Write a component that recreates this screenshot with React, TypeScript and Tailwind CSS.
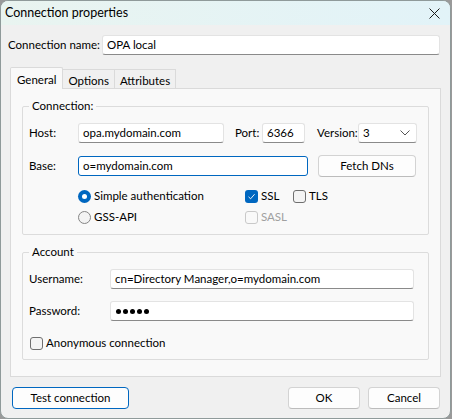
import React from "react";

const FONT = "[font-family:Lato,sans-serif]";

function Field({
  className,
  children,
  focus,
}: {
  className: string;
  children?: React.ReactNode;
  focus?: boolean;
}) {
  return (
    <div
      className={`h-[20px] shrink-0 bg-white rounded-[3px] border flex items-center pl-[4px] text-[11.5px] text-black whitespace-nowrap ${
        focus ? "border-[#0067c0]" : "border-[#e3e3e3] border-b-[#8a8a8a]"
      } ${className}`}
    >
      {children}
    </div>
  );
}

function Btn({ className, children, primary }: { className: string; children: React.ReactNode; primary?: boolean }) {
  return (
    <div
      className={`h-[22px] shrink-0 rounded-[4px] border bg-[#fdfdfd] flex items-center justify-center text-[11.5px] text-black whitespace-nowrap ${
        primary ? "border-[#0067c0]" : "border-[#d3d3d3] border-b-[#bcbcbc]"
      } ${className}`}
    >
      {children}
    </div>
  );
}

function Radio({ checked }: { checked?: boolean }) {
  return checked ? (
    <span className="w-[13px] h-[13px] rounded-full bg-[#0067c0] flex items-center justify-center shrink-0">
      <span className="w-[5px] h-[5px] rounded-full bg-white" />
    </span>
  ) : (
    <span className="w-[13px] h-[13px] rounded-full border border-[#858585] bg-[#f3f3f3] shrink-0" />
  );
}

function Check({ state }: { state: "on" | "off" | "disabled" }) {
  if (state === "on")
    return (
      <span className="w-[13px] h-[13px] rounded-[3px] bg-[#0067c0] flex items-center justify-center shrink-0">
        <svg width="9" height="9" viewBox="0 0 9 9">
          <path d="M1.5 4.8 L3.6 6.8 L7.6 2.2" fill="none" stroke="white" strokeWidth="0.9" />
        </svg>
      </span>
    );
  if (state === "off")
    return <span className="w-[13px] h-[13px] rounded-[3px] border border-[#6f6f6f] bg-[#f4f4f4] shrink-0" />;
  return <span className="w-[13px] h-[13px] rounded-[3px] border border-[#c9c9c9] shrink-0" />;
}

export default function App() {
  return (
    <div className={`w-[452px] h-[419px] bg-[#9a9a9a] whitespace-nowrap ${FONT}`}>
      <div className="w-[451px] h-[419px] rounded-[8px] border border-[#8f9a9a] bg-[#f0f0f0] overflow-hidden flex flex-col text-[11.5px]">
        {/* Title bar */}
        <div className="h-[24px] shrink-0 bg-gradient-to-r from-[#e9f4f0] to-[#e2f3f8] flex items-center justify-between pl-[4px] pr-[10px]">
          <span className="text-[12.5px] text-black">Connection properties</span>
          <svg width="11" height="11" viewBox="0 0 11 11">
            <path d="M0.5 0.5 L10.5 10.5 M10.5 0.5 L0.5 10.5" stroke="#1a1a1a" strokeWidth="1" />
          </svg>
        </div>

        {/* Connection name */}
        <div className="mt-[10px] pl-[7px] flex items-center shrink-0">
          <span className="w-[94px] text-black">Connection name:</span>
          <Field className="w-[338px]">OPA local</Field>
        </div>

        {/* Tabs */}
        <div className="mt-[12px] px-[9px] shrink-0">
          <div className="flex items-end text-black">
            <div className="relative z-10 h-[22px] -mb-px px-[6px] pt-[3px] bg-[#f9f9f9] border-x border-t border-[#dadada] rounded-t-[2px]">
              General
            </div>
            <div className="h-[19px] px-[5px] pt-[2px] bg-[#f0f0f0] border-t border-r border-[#dadada]">Options</div>
            <div className="h-[19px] px-[5px] pt-[2px] bg-[#f0f0f0] border-t border-r border-[#dadada]">Attributes</div>
          </div>

          <div className="h-[289px] bg-[#f9f9f9] border border-[#dadada] px-[11px] pt-[9px] text-black">
            {/* Connection group */}
            <fieldset className="border border-[#dcdcdc] rounded-[2px]">
              <legend className="ml-[6px] px-[3px] leading-[16px]">Connection:</legend>
              <div className="pl-[6px] pt-[9px] pb-[9px]">
                <div className="flex items-center">
                  <span className="w-[49px]">Host:</span>
                  <Field className="w-[146px]">opa.mydomain.com</Field>
                  <span className="ml-[11px] w-[27px]">Port:</span>
                  <Field className="w-[43px]">6366</Field>
                  <span className="ml-[12px] w-[41px]">Version:</span>
                  <Field className="w-[59px] justify-between pr-[6px]">
                    <span>3</span>
                    <svg width="10" height="6" viewBox="0 0 10 6">
                      <path d="M0.5 0.5 L5 5 L9.5 0.5" fill="none" stroke="#555" strokeWidth="1" />
                    </svg>
                  </Field>
                </div>
                <div className="mt-[12px] flex items-center">
                  <span className="w-[49px]">Base:</span>
                  <Field className="w-[230px]" focus>
                    o=mydomain.com
                  </Field>
                  <Btn className="ml-[10px] w-[98px]">Fetch DNs</Btn>
                </div>
                <div className="mt-[11px] pl-[49px] flex items-center h-[16px]">
                  <div className="w-[167px] flex items-center gap-[3px]">
                    <Radio checked />
                    <span>Simple authentication</span>
                  </div>
                  <div className="w-[48px] flex items-center gap-[3px]">
                    <Check state="on" />
                    <span>SSL</span>
                  </div>
                  <div className="flex items-center gap-[3px]">
                    <Check state="off" />
                    <span>TLS</span>
                  </div>
                </div>
                <div className="mt-[5px] pl-[49px] flex items-center h-[16px]">
                  <div className="w-[167px] flex items-center gap-[3px]">
                    <Radio />
                    <span>GSS-API</span>
                  </div>
                  <div className="flex items-center gap-[3px] text-[#a0a0a0]">
                    <Check state="disabled" />
                    <span>SASL</span>
                  </div>
                </div>
              </div>
            </fieldset>

            {/* Account group */}
            <fieldset className="mt-[9px] border border-[#dcdcdc] rounded-[2px]">
              <legend className="ml-[6px] px-[3px] leading-[16px]">Account</legend>
              <div className="pl-[6px] pt-[9px] pb-[8px]">
                <div className="flex items-center">
                  <span className="w-[81px]">Username:</span>
                  <Field className="w-[304px]">cn=Directory Manager,o=mydomain.com</Field>
                </div>
                <div className="mt-[12px] flex items-center">
                  <span className="w-[81px]">Password:</span>
                  <Field className="w-[304px] gap-[2px] pl-[5px]">
                    <span className="w-[5px] h-[5px] rounded-full bg-black" />
                    <span className="w-[5px] h-[5px] rounded-full bg-black" />
                    <span className="w-[5px] h-[5px] rounded-full bg-black" />
                    <span className="w-[5px] h-[5px] rounded-full bg-black" />
                    <span className="w-[5px] h-[5px] rounded-full bg-black" />
                  </Field>
                </div>
                <div className="mt-[14px] flex items-center gap-[3px] h-[16px] pl-[1px]">
                  <Check state="off" />
                  <span>Anonymous connection</span>
                </div>
              </div>
            </fieldset>
          </div>
        </div>

        {/* Buttons */}
        <div className="mt-[10px] pl-[11px] pr-[10px] flex items-center shrink-0">
          <Btn className="w-[117px]" primary>
            Test connection
          </Btn>
          <Btn className="ml-auto w-[72px]">OK</Btn>
          <Btn className="ml-[8px] w-[72px]">Cancel</Btn>
        </div>
      </div>
    </div>
  );
}
